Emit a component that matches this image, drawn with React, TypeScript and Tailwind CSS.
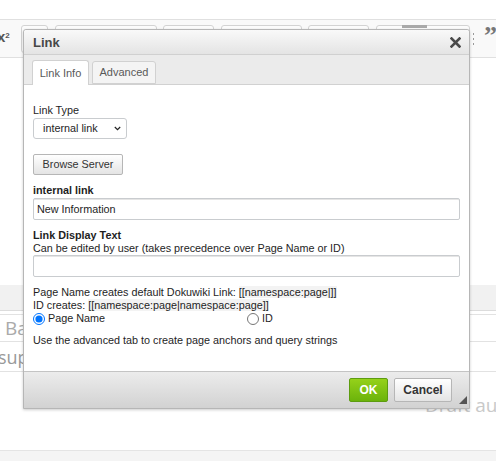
import React from 'react'

const toolbarBoxes = [
  { left: 21, width: 27 },
  { left: 55, width: 102 },
  { left: 163, width: 51 },
  { left: 221, width: 81 },
  { left: 308, width: 61 },
  { left: 376, width: 94 },
]

function CloseIcon() {
  return (
    <svg width="11" height="11" viewBox="0 0 11 11">
      <path d="M1.5 1.5 L9.5 9.5 M9.5 1.5 L1.5 9.5" stroke="#4a4a4a" strokeWidth="2.6" strokeLinecap="square" />
    </svg>
  )
}

function Chevron() {
  return (
    <svg width="7" height="5" viewBox="0 0 7 5">
      <path d="M0.8 1 L3.5 3.7 L6.2 1" fill="none" stroke="#222" strokeWidth="1.2" />
    </svg>
  )
}

export default function App() {
  return (
    <div className="relative w-[496px] h-[461px] overflow-hidden bg-white">
      {/* Background editor page */}
      <div className="flex flex-col h-full font-['Open_Sans',Arial,sans-serif]">
        <div className="h-[19px]" />
        <div className="relative h-[39px] border-t border-b border-[#e0e0e0] bg-[#f9f9f9]">
          <span className="absolute left-[-3px] top-[9px] text-[15px] font-bold leading-none text-[#555] font-['Liberation_Sans',Arial,sans-serif]">
            x<sup className="text-[8px]">2</sup>
          </span>
          {toolbarBoxes.map((b, i) => (
            <div
              key={i}
              className="absolute top-[5px] h-[28px] border border-[#d3d3d3] rounded-[3px] bg-[#fcfcfc]"
              style={{ left: b.left, width: b.width }}
            />
          ))}
          <div className="absolute left-[402px] top-[5px] w-[25px] h-[3px] bg-[#a9a9a9]" />
          <div className="absolute left-[473px] top-[13px] flex flex-col gap-[3px]">
            <span className="w-[1px] h-[2px] bg-[#999]" />
            <span className="w-[1px] h-[2px] bg-[#999]" />
            <span className="w-[1px] h-[2px] bg-[#999]" />
          </div>
          <span className="absolute left-[484px] top-[3px] text-[26px] font-bold leading-none text-[#777] font-['Liberation_Serif',serif]">
            ”
          </span>
        </div>
        <div className="h-[227px]" />
        <div className="h-[26px] bg-[#f1f1f1] border-b border-[#dcdcdc]" />
        <div className="h-[3px]" />
        <div className="h-[27px] border-t border-[#e2e2e2] pl-[5px] text-[19px] leading-[26px] text-[#aaa]">
          Basic
        </div>
        <div className="h-[31px] border-t border-b border-[#e2e2e2] text-[18px] leading-[30px] text-[#999]">
          <span className="ml-[-2px]">supported</span>
        </div>
        <div className="h-[21px]" />
        <div className="h-[24px] pl-[425px] whitespace-nowrap overflow-hidden text-[19px] leading-[24px] text-[#c9c9c9]">
          Draft autosaved
        </div>
        <div className="flex-1" />
        <div className="h-[11px] border-t border-[#e4e4e4] bg-[#f4f4f4]" />
      </div>

      {/* Link dialog */}
      <div className="absolute left-[23px] top-[29px] w-[447px] h-[380px] flex flex-col border border-[#b6b6b6] rounded-t-[3px] shadow-[0_1px_3px_rgba(0,0,0,0.2)] bg-white font-['Liberation_Sans',Arial,sans-serif] text-[11px] leading-[13px] text-[#1e1e1e]">
        {/* Title */}
        <div className="h-[25px] shrink-0 flex items-center justify-between pl-[9px] pr-[8px] bg-linear-to-b from-[#f9f9f9] to-[#e4e4e4] border-b border-[#d0d0d0] rounded-t-[3px]">
          <span className="text-[13px] font-bold text-[#474747]">Link</span>
          <CloseIcon />
        </div>

        {/* Tabs */}
        <div className="h-[29px] shrink-0 flex items-end gap-[3px] pl-[8px] bg-[#ebebeb]">
          <div className="relative z-10 -mb-px h-[25px] w-[57px] flex items-center justify-center bg-white border border-b-0 border-[#d1d1d1] rounded-t-[3px] text-[#595959]">
            Link Info
          </div>
          <div className="h-[23px] w-[64px] flex items-center justify-center bg-[#f4f4f4] border border-[#d1d1d1] rounded-t-[3px] text-[#595959]">
            Advanced
          </div>
        </div>

        {/* Content */}
        <div className="flex-1 flex flex-col border-t border-[#d1d1d1] bg-white px-[9px] text-[10.8px]">
          <div className="mt-[19px]">Link Type</div>
          <div className="mt-[1px] w-[94px] h-[21px] flex items-center justify-between pl-[9px] pr-[5px] border border-[#c9cccf] rounded-[3px] bg-white">
            <span>internal link</span>
            <Chevron />
          </div>

          <div className="mt-[15px] w-[90px] h-[21px] flex items-center justify-center border border-[#b6b6b6] rounded-[2px] bg-linear-to-b from-[#ffffff] to-[#e4e4e4] text-[#333]">
            Browse Server
          </div>

          <div className="mt-[9px] font-bold">internal link</div>
          <div className="mt-[1px] h-[22px] flex items-center pl-[3px] border border-[#c9cccf] rounded-[2px] shadow-[inset_0_1px_0_#e5e5e5]">
            New Information
          </div>

          <div className="mt-[9px] font-bold">Link Display Text</div>
          <div>Can be edited by user (takes precedence over Page Name or ID)</div>
          <div className="mt-[0px] h-[22px] border border-[#c9cccf] rounded-[2px] shadow-[inset_0_1px_0_#e5e5e5]" />

          <div className="mt-[9px]">
            Page Name creates default Dokuwiki Link: <span className="bg-[#f3f3f3]">[[namespace:page|]]</span>
          </div>
          <div>
            ID creates: <span className="bg-[#f3f3f3]">[[namespace:page|namespace:page]]</span>
          </div>
          <div className="flex items-center h-[13px]">
            <label className="w-[214px] flex items-center gap-[3px]">
              <input type="radio" name="lt" defaultChecked className="m-0 w-[12px] h-[12px]" />
              <span>Page Name</span>
            </label>
            <label className="flex items-center gap-[3px]">
              <input type="radio" name="lt" className="m-0 w-[12px] h-[12px]" />
              <span>ID</span>
            </label>
          </div>

          <div className="mt-[9px]">Use the advanced tab to create page anchors and query strings</div>
        </div>

        {/* Footer */}
        <div className="relative h-[37px] shrink-0 flex items-center justify-end gap-[6px] pr-[17px] border-t border-[#c4c4c4] bg-linear-to-b from-[#ececec] to-[#d2d2d2]">
          <div className="w-[39px] h-[24px] flex items-center justify-center rounded-[2px] border border-[#5d9c10] bg-linear-to-b from-[#95d11a] to-[#6bb30b] text-white font-bold text-[12px]">
            OK
          </div>
          <div className="w-[58px] h-[24px] flex items-center justify-center rounded-[2px] border border-[#b6b6b6] bg-linear-to-b from-[#ffffff] to-[#e4e4e4] text-[#333] font-bold text-[12px]">
            Cancel
          </div>
          <svg className="absolute right-[2px] bottom-[4px]" width="8" height="8" viewBox="0 0 8 8">
            <polygon points="8,0 8,8 0,8" fill="#555" />
          </svg>
        </div>
      </div>
    </div>
  )
}
